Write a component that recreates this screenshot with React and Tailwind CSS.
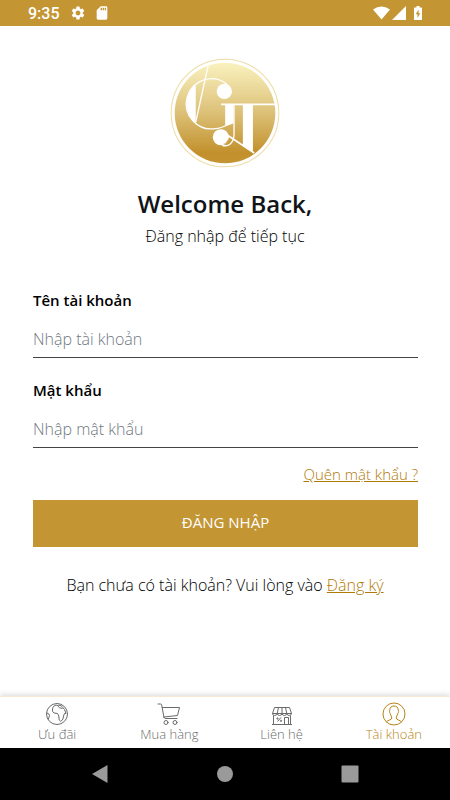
function Logo() {
  return (
    <svg viewBox="16 15 329 329" className="size-[110px]" role="img" aria-label="GT">
      <defs>
        <linearGradient id="gold" x1="0" y1="0" x2="0" y2="1">
          <stop offset="0" stopColor="#faf2bf" />
          <stop offset="0.5" stopColor="#dcc077" />
          <stop offset="0.9" stopColor="#c2902b" />
          <stop offset="1" stopColor="#c49534" />
        </linearGradient>
      </defs>
      <circle cx="180.5" cy="179.5" r="161" fill="none" stroke="#eddca4" strokeWidth="3" />
      <circle cx="180.5" cy="179.5" r="150.5" fill="url(#gold)" />
      <g fill="none" stroke="#fff" strokeWidth="4">
        <path d="M186 93A75 75 0 1 0 152 226C174 226 184 214 206 208" />
        <path d="M130 38L93 207" />
        <path d="M169 153.5H331" strokeWidth="5" />
        <path d="M207.5 155V244C207 268 192 282 172 276" />
        <path d="M185 244L268 299" strokeWidth="5" />
      </g>
      <path d="M93 94A75 75 0 0 0 93 210Z" fill="#fff" />
      <circle cx="178.5" cy="115" r="23" fill="#fff" />
      <path d="M181 153H206V207L181 219ZM234 153H264V298L234 279Z" fill="#fff" />
      <circle cx="168" cy="252" r="24" fill="#fff" />
      <path d="M191 256C190 266 182 274 172 273C182 271 187 265 191 256Z" fill="#c99a3c" />
    </svg>
  );
}

function StatusBar() {
  return (
    <header className="flex h-[26px] items-center bg-[#c49533] px-7 text-white">
      <span className="pt-0.5 font-['Roboto'] text-base leading-6 font-medium">9:35</span>
      <svg viewBox="0 0 24 24" className="ml-2.5 size-4" fill="currentColor" aria-hidden="true">
        <path d="M19.14 12.94c.04-.3.06-.61.06-.94 0-.32-.02-.64-.07-.94l2.03-1.58a.49.49 0 0 0 .12-.61l-1.92-3.32a.488.488 0 0 0-.59-.22l-2.39.96c-.5-.38-1.03-.7-1.62-.94l-.36-2.54a.484.484 0 0 0-.48-.41h-3.84c-.24 0-.43.17-.47.41l-.36 2.54c-.59.24-1.13.57-1.62.94l-2.39-.96c-.22-.08-.47 0-.59.22L2.74 8.87c-.12.21-.08.47.12.61l2.03 1.58c-.05.3-.09.63-.09.94s.02.64.07.94l-2.03 1.58a.49.49 0 0 0-.12.61l1.92 3.32c.12.22.37.29.59.22l2.39-.96c.5.38 1.03.7 1.62.94l.36 2.54c.05.24.24.41.48.41h3.84c.24 0 .44-.17.47-.41l.36-2.54c.59-.24 1.13-.56 1.62-.94l2.39.96c.22.08.47 0 .59-.22l1.92-3.32c.12-.22.07-.47-.12-.61zM12 15.6A3.61 3.61 0 0 1 8.4 12c0-1.98 1.62-3.6 3.6-3.6s3.6 1.62 3.6 3.6-1.62 3.6-3.6 3.6z" />
      </svg>
      <svg viewBox="0 0 24 24" className="ml-2 size-4" fill="currentColor" aria-hidden="true">
        <path d="M18 2h-8L4.02 8 4 20c0 1.1.9 2 2 2h12c1.1 0 2-.9 2-2V4c0-1.1-.9-2-2-2zm-6 6h-2V4h2zm3 0h-2V4h2zm3 0h-2V4h2z" />
      </svg>
      <div className="ml-auto flex items-center gap-0.5">
        <svg viewBox="0 0 17 14" className="h-3.5 w-[17px]" fill="currentColor" aria-hidden="true">
          <path d="M8.5 13.5L0 3.5Q8.5-2.5 17 3.5Z" />
        </svg>
        <svg viewBox="0 0 14 14" className="size-3.5" fill="currentColor" aria-hidden="true">
          <path d="M0 14L14 0V14Z" />
        </svg>
        <svg viewBox="0 0 8 14" className="ml-1.5 h-3.5 w-2" fill="currentColor" aria-hidden="true">
          <path d="M2.5 0h3v1.5H7.5Q8 1.5 8 2V13.5Q8 14 7.5 14H.5Q0 14 0 13.5V2Q0 1.5.5 1.5H2.5Z" />
          <path d="M4.6 3.5L1.7 8.2H3.5V12L6.3 7.2H4.6Z" fill="#c49533" />
        </svg>
      </div>
    </header>
  );
}

function Field({ id, label, type, placeholder }) {
  return (
    <div className="flex flex-col">
      <label htmlFor={id} className="text-[15px] leading-6 font-semibold text-black">
        {label}
      </label>
      <input
        id={id}
        type={type}
        placeholder={placeholder}
        className="mt-2 h-[38px] w-full rounded-none border-b border-[#444] bg-transparent text-base font-light text-gray-900 outline-none placeholder:text-[#6f7782]"
      />
    </div>
  );
}

function GlobeIcon() {
  return (
    <svg viewBox="0 0 24 24" className="size-6" fill="none" stroke="currentColor" strokeWidth="1" strokeLinejoin="round" aria-hidden="true">
      <circle cx="12" cy="12" r="10.5" />
      <path d="M8 5.5C8.5 3.5 11 2.8 12.5 3.5C14 2.8 16 3.5 17 4.5L19.5 7.5L21 11.5H19.5L18.5 14L18 17L15.8 19.5L14.2 18L13.8 14L12.5 11.5L9 11L7.5 9.2V7Z" />
      <path d="M12.5 3.5L14.5 5.8L17.5 6.5M1.7 11L3.8 11.8L4.5 13.8L3.2 17.5" />
    </svg>
  );
}

function CartIcon() {
  return (
    <svg viewBox="0 0 24 24" className="size-6" fill="none" stroke="currentColor" strokeWidth="1" strokeLinejoin="round" strokeLinecap="round" aria-hidden="true">
      <path d="M1 2H3.5Q4.5 2 4.7 3L7 15.5M5.2 5.5H22.5L20.5 13.5L6.8 15L8 16.5H20" />
      <circle cx="9" cy="20.5" r="2" />
      <circle cx="18" cy="20.5" r="2" />
    </svg>
  );
}

function ShopIcon() {
  return (
    <svg viewBox="0 0 24 24" className="size-6" fill="none" stroke="currentColor" strokeWidth="1" strokeLinejoin="round" aria-hidden="true">
      <path d="M4.5 5.5H19.5L21.5 11.5H2.5ZM8.5 5.5L7.2 11.5M12 5.5V11.5M15.5 5.5L16.8 11.5M2.5 11.5Q2.7 13.5 4.8 13.5T7.2 11.5Q7.5 13.5 9.6 13.5T12 11.5Q12.3 13.5 14.4 13.5T16.8 11.5Q17.2 13.5 19.2 13.5T21.5 11.5" />
      <path d="M3.5 13.5V22.5M20.5 13.5V22.5M2 22.5H22M14.5 22.5V15.5H18.5V22.5M7.5 19.5L11 15.5" />
      <circle cx="7.5" cy="16.5" r="0.7" />
      <circle cx="11" cy="18.8" r="0.7" />
    </svg>
  );
}

function ProfileIcon() {
  return (
    <svg viewBox="0 0 24 24" className="size-6" fill="none" stroke="currentColor" strokeWidth="1" strokeLinejoin="round" aria-hidden="true">
      <circle cx="12" cy="12" r="11" />
      <path d="M4.5 20C5.5 18 9.8 18 9.8 16C9.8 14.5 8.6 13.5 8.2 11.5C7 10 7.6 8.5 7.8 8C7.8 5.5 9.5 4 12 4S16.2 5.5 16.2 8C16.4 8.5 17 10 15.8 11.5C15.4 13.5 14.2 14.5 14.2 16C14.2 18 18.5 18 19.5 20" />
    </svg>
  );
}

const tabs = [
  { label: "Ưu đãi", Icon: GlobeIcon },
  { label: "Mua hàng", Icon: CartIcon },
  { label: "Liên hệ", Icon: ShopIcon },
  { label: "Tài khoản", Icon: ProfileIcon, active: true },
];

export default function App() {
  return (
    <div className="flex min-h-screen flex-col bg-white font-['Open_Sans','Noto_Sans',sans-serif]">
      <StatusBar />

      <main className="flex flex-1 flex-col px-8 pt-8">
        <div className="flex flex-col items-center">
          <Logo />
          <h1 className="mt-5 text-2xl leading-8 font-semibold text-[#101418]">Welcome Back,</h1>
          <p className="mt-1 text-base leading-6 font-light text-black">Đăng nhập để tiếp tục</p>
        </div>

        <form className="mt-10 flex flex-col pl-px" onSubmit={(e) => e.preventDefault()}>
          <div className="flex flex-col gap-5">
            <Field id="account" label="Tên tài khoản" type="text" placeholder="Nhập tài khoản" />
            <Field id="password" label="Mật khẩu" type="password" placeholder="Nhập mật khẩu" />
          </div>
          <a href="#forgot" className="mt-3.5 self-end text-[15px] leading-6 font-light text-[#b07a08] underline">
            Quên mật khẩu ?
          </a>
          <button type="submit" className="mt-3.5 h-[47px] bg-[#c49533] pb-0.5 text-[15px] text-white">
            ĐĂNG NHẬP
          </button>
        </form>

        <p className="mt-[26px] mb-6 text-center text-base leading-6 font-light text-black">
          Bạn chưa có tài khoản? Vui lòng vào{" "}
          <a href="#register" className="text-[#b07a08] underline">
            Đăng ký
          </a>
        </p>
      </main>

      <nav className="grid h-[52px] grid-cols-4 border-t border-[#f5ead3] bg-white pl-px shadow-[0_-2px_5px_rgba(0,0,0,0.12)]">
        {tabs.map(({ label, Icon, active }) => (
          <a
            key={label}
            href="#tab"
            aria-current={active ? "page" : undefined}
            className={
              active
                ? "flex flex-col items-center pt-[5px] text-[#b88415]"
                : "flex flex-col items-center pt-[5px] text-[#6b6b6b]"
            }
          >
            <Icon />
            <span className="text-[13px] leading-4 font-light">{label}</span>
          </a>
        ))}
      </nav>

      <footer className="flex h-[52px] items-center justify-center gap-[108px] bg-black text-[#9a9a9a]">
        <button type="button" aria-label="Back">
          <svg viewBox="0 0 18 18" className="size-[18px]" fill="currentColor">
            <path d="M16.5 0V18L1 9Z" />
          </svg>
        </button>
        <button type="button" aria-label="Home">
          <svg viewBox="0 0 16 16" className="size-4" fill="currentColor">
            <circle cx="8" cy="8" r="8" />
          </svg>
        </button>
        <button type="button" aria-label="Recent apps">
          <svg viewBox="0 0 18 18" className="size-[18px]" fill="currentColor">
            <rect x="0.5" y="0.5" width="17" height="17" rx="1" />
          </svg>
        </button>
      </footer>
    </div>
  );
}
